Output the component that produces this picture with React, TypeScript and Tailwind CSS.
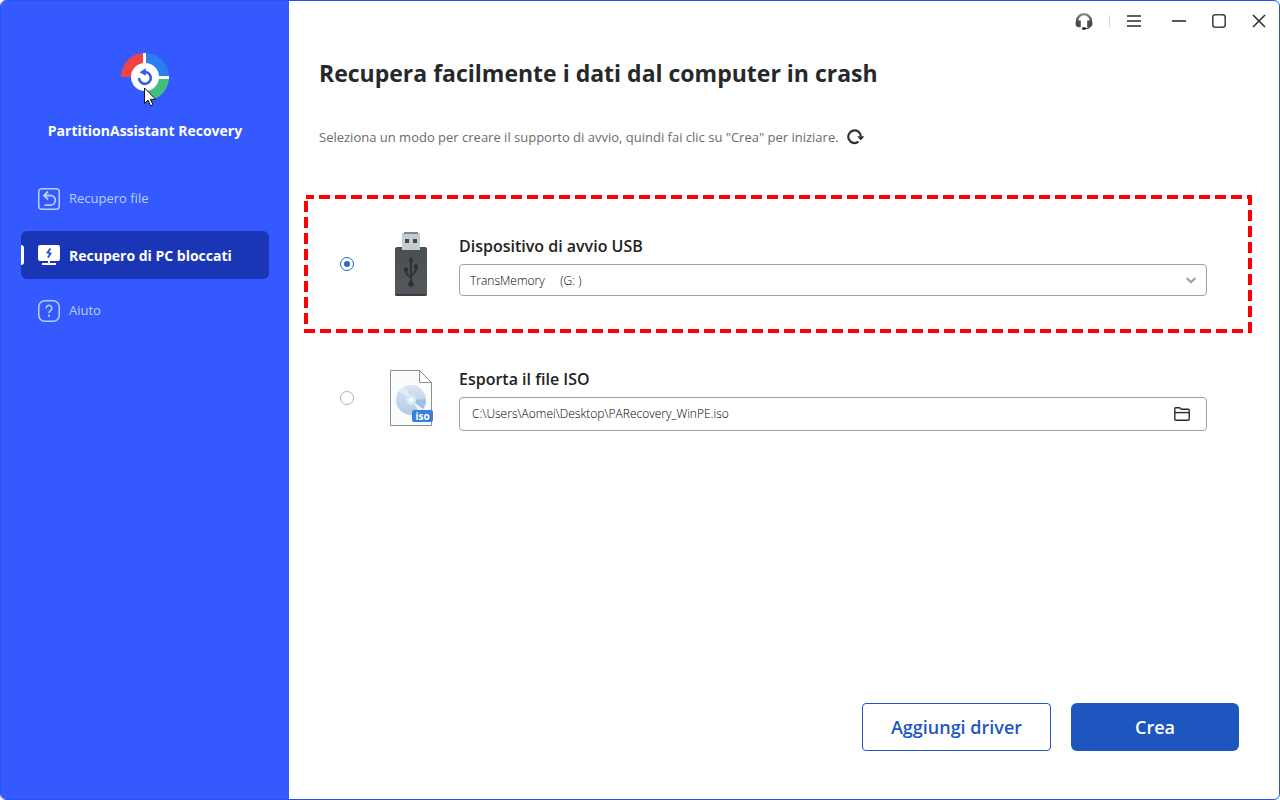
import type { ReactNode } from "react";
import { useState } from "react";
import clsx from "clsx";

type NavItemProps = {
  icon: ReactNode;
  label: string;
  active?: boolean;
};

function Logo() {
  return (
    <svg width="48" height="48" viewBox="0 0 48 48" aria-hidden="true">
      <path d="M0 24A24 24 0 0 1 22 0V24Z" fill="#f04444" />
      <path d="M25 0A24 24 0 0 1 48 23H25Z" fill="#2a7ff0" />
      <path d="M48 26A24 24 0 0 1 25 48V26Z" fill="#42bf7c" />
      <path d="M22 0h3v12h-3zM36 23h12v3H36z" fill="#fff" />
      <circle cx="24" cy="24" r="14" fill="#fff" />
      <path
        d="M22.500 19.200A5.900 5.900 0 1 1 18 25"
        fill="none"
        stroke="#3459f4"
        strokeWidth="2.600"
      />
      <path d="M18.500 19.300l6.300-4v7.500z" fill="#3459f4" />
    </svg>
  );
}

function Pointer() {
  return (
    <svg
      className="absolute left-[23px] top-[34px]"
      width="13"
      height="20"
      viewBox="0 0 13 20"
      aria-hidden="true"
    >
      <path
        d="M.5 1v15.500l3.500-3.300 2.600 5.600 2.400-1.100-2.500-5.400h5.200z"
        fill="#fff"
        stroke="#111"
      />
    </svg>
  );
}

function RecoverIcon() {
  return (
    <svg width="22" height="22" viewBox="0 0 22 22" fill="none" stroke="#b8ceff" aria-hidden="true">
      <rect x=".75" y=".75" width="20.500" height="20.500" rx="3" strokeWidth="1.500" />
      <path
        d="M10 3.500L6 7.500l4 4M6 7.500h6.500a4.800 4.800 0 0 1 0 9.600H6.500"
        strokeWidth="1.800"
      />
    </svg>
  );
}

function CrashedPcIcon() {
  return (
    <svg width="22" height="20" viewBox="0 0 22 20" aria-hidden="true">
      <rect width="22" height="16" rx="2" fill="#fff" />
      <path d="M10 16h2v2h6v2H4v-2h6z" fill="#fff" />
      <path d="M12.500 3.500L9.500 7.500l3 1L10 12.500" fill="none" stroke="#1d50c4" strokeWidth="1.800" />
    </svg>
  );
}

function HelpIcon() {
  return (
    <svg width="22" height="22" viewBox="0 0 22 22" fill="none" stroke="#b8ceff" aria-hidden="true">
      <rect x=".75" y=".75" width="20.500" height="20.500" rx="6" strokeWidth="1.500" />
      <path
        d="M8.200 8.200a2.800 2.800 0 1 1 4.600 2.100c-1.100.9-1.800 1.400-1.800 2.900"
        strokeWidth="1.600"
      />
      <path d="M10.100 14.800h1.800v1.900h-1.800z" fill="#b8ceff" stroke="none" />
    </svg>
  );
}

function HeadsetIcon() {
  return (
    <svg width="18" height="18" viewBox="0 0 18 18" aria-hidden="true">
      <defs>
        <linearGradient id="headset" x1="0" y1="0" x2="0" y2="1">
          <stop offset="0" stopColor="#9a9a9a" />
          <stop offset="1" stopColor="#303236" />
        </linearGradient>
      </defs>
      <path
        d="M1 10V9a8 8 0 0 1 16 0v1h-2.200V9a5.800 5.800 0 0 0-11.600 0v1z"
        fill="url(#headset)"
      />
      <path
        d="M2 8.500h3.800v6.800H4C1.700 15.300.5 13.800.5 11.800S1 9 2 8.500zM16 8.500h-3.800v6.800H14c2.300 0 3.500-1.500 3.500-3.500S17 9 16 8.500z"
        fill="#4a4c50"
      />
      <path d="M15 14.500c-.5 1.500-2 2-4 2" fill="none" stroke="#4a4c50" strokeWidth="1.200" />
      <rect x="7" y="15.300" width="4" height="2.500" rx="1.200" fill="#222" />
    </svg>
  );
}

function RefreshIcon() {
  return (
    <svg width="18" height="16" viewBox="0 0 18 16" aria-hidden="true">
      <path
        d="M11.500 12.700A6.300 6.300 0 1 1 13.900 7.500"
        fill="none"
        stroke="#2f3032"
        strokeWidth="2.200"
      />
      <path d="M10.200 7.300h7.200l-3.600 4.200z" fill="#2f3032" />
    </svg>
  );
}

function UsbStick() {
  return (
    <svg width="32" height="64" viewBox="0 0 32 64" aria-hidden="true">
      <defs>
        <linearGradient id="usbBody" x1="0" y1="0" x2="0" y2="1">
          <stop offset="0" stopColor="#4b4e51" />
          <stop offset="1" stopColor="#54585c" />
        </linearGradient>
      </defs>
      <rect x="7" y="1" width="18" height="17" fill="#c3ccd1" />
      <path d="M9 0h14v2H9z" fill="#85898c" />
      <path d="M10 7h4v4h-4zM18 7h4v4h-4z" fill="#44474a" />
      <rect y="15" width="32" height="49" rx="2" fill="url(#usbBody)" />
      <path d="M7 15h18v3H7z" fill="#c3ccd1" />
      <path d="M0 62h32a2 2 0 0 1-2 2H2a2 2 0 0 1-2-2z" fill="#3c3f42" />
      <g stroke="#2e3032" strokeWidth="1.800" fill="none">
        <path d="M16 29v24M11 38v2c0 3 5 4 5 7M21 35v3c0 3-5 4-5 7" />
      </g>
      <g fill="#2e3032">
        <path d="M16 24.500l2.800 5h-5.600z" />
        <circle cx="11" cy="37.500" r="2.200" />
        <path d="M19 32.500h4v4h-4z" />
        <circle cx="16" cy="52" r="2.700" />
      </g>
    </svg>
  );
}

function IsoFile() {
  return (
    <span className="relative block h-14 w-[42px]">
      <svg width="42" height="56" viewBox="0 0 42 56" aria-hidden="true">
        <defs>
          <linearGradient id="disc" x1="0" y1="0" x2="0" y2="1">
            <stop offset="0" stopColor="#d9e4f1" />
            <stop offset="1" stopColor="#b0cbe8" />
          </linearGradient>
        </defs>
        <path d="M.5.500h29l12 12v43H.5z" fill="#fbfcfe" stroke="#8a8f90" />
        <circle cx="21" cy="30" r="15" fill="url(#disc)" />
        <path d="M21 30L9 21a15 15 0 0 1 7-5z" fill="#e3ecf6" />
        <path d="M21 30l15-1a15 15 0 0 1-3 10z" fill="#9fc0e4" />
        <path d="M21 30l12 9-3 3z" fill="#edf3fa" />
        <circle cx="21" cy="30" r="5" fill="#dce7f3" />
        <circle cx="21" cy="30" r="2.200" fill="#fff" />
        <path d="M29.500.500v12h12z" fill="#fff" stroke="#8a8f90" />
      </svg>
      <span className="absolute -right-px bottom-1 flex h-3 w-[21px] items-center justify-center rounded-xs bg-[#3b80d8] text-[10px] leading-3 font-bold text-white">
        iso
      </span>
    </span>
  );
}

function FolderIcon() {
  return (
    <svg width="16" height="14" viewBox="0 0 16 14" fill="none" stroke="#2b2b2b" strokeWidth="1.400" aria-hidden="true">
      <path d="M.8 12V1.700C.8 1.100 1.100.8 1.700.8h3.900l1.800 1.500h6.900c.6 0 .9.400.9.900V12c0 .8-.4 1.200-1.100 1.200H1.900C1.200 13.200.8 12.800.8 12z" />
      <path d="M.8 5.600h14.400" />
    </svg>
  );
}

function NavItem({ icon, label, active }: NavItemProps) {
  return (
    <a
      href="#"
      className={clsx(
        "relative flex h-12 items-center rounded-md pl-4",
        active ? "bg-[#1a35b5] text-[14px] font-bold text-white" : "text-[13px] text-[#b8ceff]"
      )}
    >
      {active && <span className="absolute left-0 h-5 w-[3px] rounded-r-sm bg-white" />}
      <span className="mr-2 flex w-6 justify-center">{icon}</span>
      {label}
    </a>
  );
}

function Sidebar() {
  return (
    <aside className="flex w-72 shrink-0 flex-col bg-[#345aff] px-5">
      <div className="flex flex-col items-center pt-[52px]">
        <div className="relative">
          <Logo />
          <Pointer />
        </div>
        <p className="mt-[18px] text-[14px] leading-6 font-bold text-white">
          PartitionAssistant Recovery
        </p>
      </div>
      <nav className="mt-8 flex flex-col gap-2">
        <NavItem icon={<RecoverIcon />} label="Recupero file" />
        <NavItem icon={<CrashedPcIcon />} label="Recupero di PC bloccati" active />
        <NavItem icon={<HelpIcon />} label="Aiuto" />
      </nav>
    </aside>
  );
}

function TitleBar() {
  return (
    <header className="flex h-10 items-center justify-end pr-[13px] text-[#2b2b2b]">
      <button type="button" aria-label="Assistenza">
        <HeadsetIcon />
      </button>
      <span className="mx-4 h-3 w-px bg-[#cfd8e4]" />
      <button type="button" aria-label="Menu" className="mr-[30px]">
        <svg width="16" height="14" viewBox="0 0 16 14" stroke="currentColor" strokeWidth="1.600">
          <path d="M1 2h14M1 7h14M1 12h14" />
        </svg>
      </button>
      <button type="button" aria-label="Riduci a icona" className="mr-[26px]">
        <svg width="14" height="14" viewBox="0 0 14 14" stroke="#55585b" strokeWidth="1.800">
          <path d="M0 7h14" />
        </svg>
      </button>
      <button type="button" aria-label="Ingrandisci" className="mr-[26px]">
        <svg width="14" height="14" viewBox="0 0 14 14" fill="none" stroke="#44474a" strokeWidth="1.600">
          <rect x=".8" y=".8" width="12.400" height="12.400" rx="2.500" />
        </svg>
      </button>
      <button type="button" aria-label="Chiudi">
        <svg width="14" height="14" viewBox="0 0 14 14" stroke="currentColor" strokeWidth="1.500">
          <path d="M1 1l12 12M13 1L1 13" />
        </svg>
      </button>
    </header>
  );
}

type OptionRadioProps = {
  value: string;
  label: string;
  checked: boolean;
  onSelect: (value: string) => void;
};

function OptionRadio({ value, label, checked, onSelect }: OptionRadioProps) {
  return (
    <span className="relative flex h-[14px] w-[14px] items-center justify-center">
      <input
        type="radio"
        name="media"
        value={value}
        checked={checked}
        onChange={() => onSelect(value)}
        aria-label={label}
        className="h-[14px] w-[14px] appearance-none rounded-full border border-[#aeb4b8] bg-white checked:border-[#1f6cc5]"
      />
      {checked && (
        <span className="pointer-events-none absolute h-[6px] w-[6px] rounded-full bg-[#1f6cc5]" />
      )}
    </span>
  );
}

// dashed red frame around the highlighted option
function Highlight() {
  return (
    <svg className="pointer-events-none absolute inset-0 h-full w-full" aria-hidden="true">
      <rect
        x="2"
        y="2"
        className="h-[calc(100%-4px)] w-[calc(100%-4px)]"
        fill="none"
        stroke="#fe0000"
        strokeWidth="4"
        strokeDasharray="11 5"
        strokeDashoffset="3"
      />
    </svg>
  );
}

export default function App() {
  const [media, setMedia] = useState("usb");
  const [isoPath, setIsoPath] = useState("C:\\Users\\Aomei\\Desktop\\PARecovery_WinPE.iso");

  return (
    <div className="flex min-h-screen overflow-hidden rounded-md border border-[#2457e6] bg-white font-['Open_Sans','Noto_Sans',sans-serif]">
      <Sidebar />
      <main className="flex min-w-0 flex-1 flex-col">
        <TitleBar />
        <h1 className="mt-4 ml-[30px] text-[23px] leading-8 font-bold text-[#26282a]">
          Recupera facilmente i dati dal computer in crash
        </h1>
        <div className="mt-9 ml-[30px] flex items-center">
          <p className="text-[13px] leading-6 text-[#6b6b6b]">
            Seleziona un modo per creare il supporto di avvio, quindi fai clic su "Crea" per
            iniziare.
          </p>
          <button type="button" aria-label="Aggiorna" className="ml-2">
            <RefreshIcon />
          </button>
        </div>

        <div className="mt-[46px] mr-[27px] ml-[15px]">
          <div className="relative flex h-[138px] items-center pr-[45px] pl-9">
            <Highlight />
            <OptionRadio
              value="usb"
              label="Dispositivo di avvio USB"
              checked={media === "usb"}
              onSelect={setMedia}
            />
            <span className="ml-[30px] flex w-[54px] justify-center">
              <UsbStick />
            </span>
            <div className="ml-[21px] flex-1">
              <label htmlFor="device" className="block text-[16px] leading-7 font-semibold text-[#222]">
                Dispositivo di avvio USB
              </label>
              <div className="relative mt-1">
                <select
                  id="device"
                  className="block h-8 w-full appearance-none rounded-sm border border-[#9da0b0] bg-white pt-px pl-[10px] text-[12px] font-light text-black"
                >
                  <option>{"TransMemory\u00a0\u00a0\u00a0\u00a0\u00a0(G: )"}</option>
                </select>
                <svg
                  className="pointer-events-none absolute top-[13px] right-[11px]"
                  width="10"
                  height="7"
                  viewBox="0 0 10 7"
                  fill="none"
                  stroke="#9b9fab"
                  strokeWidth="2"
                  aria-hidden="true"
                >
                  <path d="M.7 1L5 5.300 9.300 1" />
                </svg>
              </div>
            </div>
          </div>

          <div className="flex h-[130px] items-center pr-[45px] pl-9">
            <OptionRadio
              value="iso"
              label="Esporta il file ISO"
              checked={media === "iso"}
              onSelect={setMedia}
            />
            <span className="ml-[30px] flex w-[54px] justify-center">
              <IsoFile />
            </span>
            <div className="ml-[21px] flex-1">
              <label htmlFor="iso" className="block text-[16px] leading-7 font-semibold text-[#222]">
                Esporta il file ISO
              </label>
              <div className="mt-1 flex h-[34px] items-center rounded-sm border border-[#9da0b0] pr-4 pl-3">
                <input
                  id="iso"
                  type="text"
                  value={isoPath}
                  onChange={(e) => setIsoPath(e.target.value)}
                  className="min-w-0 flex-1 text-[12px] font-light text-black outline-none"
                />
                <button type="button" aria-label="Sfoglia">
                  <FolderIcon />
                </button>
              </div>
            </div>
          </div>
        </div>

        <div className="mt-auto flex justify-end gap-5 pr-10 pb-12">
          <button
            type="button"
            className="h-12 w-[189px] rounded-sm border border-[#1e56c0] pt-px text-[18px] font-semibold text-[#1e56c0]"
          >
            Aggiungi driver
          </button>
          <button
            type="button"
            className="h-12 w-[168px] rounded-md bg-[#1e56c0] pt-px text-[18px] font-semibold text-white"
          >
            Crea
          </button>
        </div>
      </main>
    </div>
  );
}
